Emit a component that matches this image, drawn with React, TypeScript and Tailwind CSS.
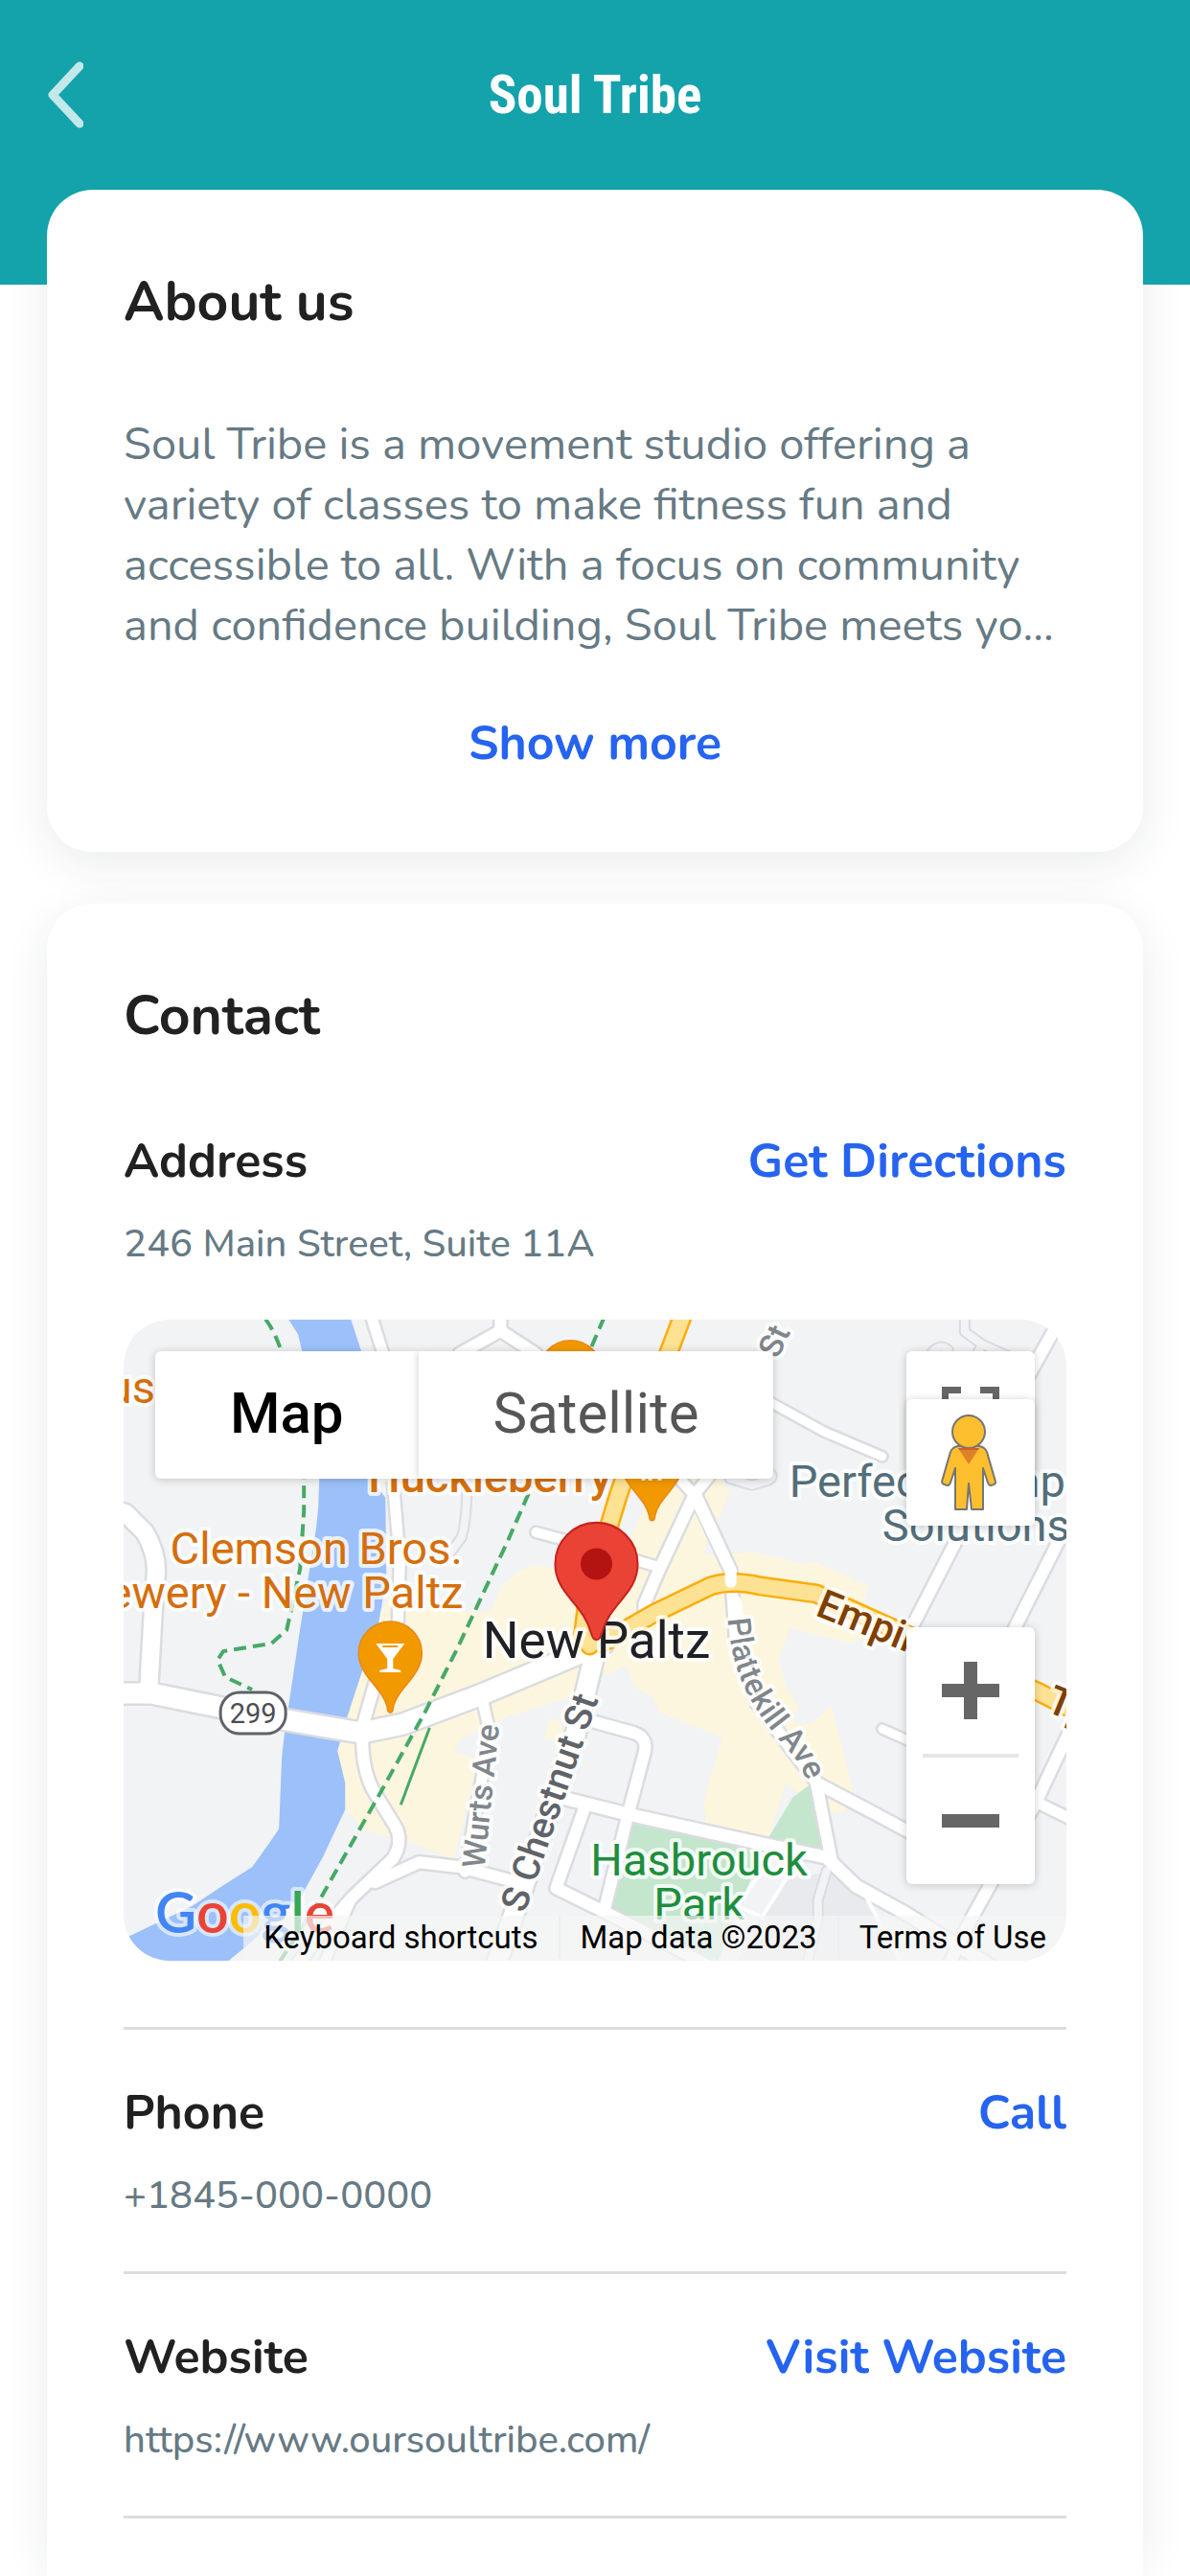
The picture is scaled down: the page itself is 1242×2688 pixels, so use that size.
import { useState } from 'react'
import type { ReactNode } from 'react'
import { clsx } from 'clsx'

const ABOUT =
  'Soul Tribe is a movement studio offering a variety of classes to make fitness fun and accessible to all. With a focus on community and confidence building, Soul Tribe meets you where you are and helps you move with joy.'

interface ContactItem {
  label: string
  value: string
  action: string
  href: string
}

const address: ContactItem = {
  label: 'Address',
  value: '246 Main Street, Suite 11A',
  action: 'Get Directions',
  href: '#directions',
}

const items: ContactItem[] = [
  { label: 'Phone', value: '+1845-000-0000', action: 'Call', href: 'tel:+18450000000' },
  {
    label: 'Website',
    value: 'https://www.oursoultribe.com/',
    action: 'Visit Website',
    href: '#website',
  },
]

// Streets drawn as a grey casing with a white line on top
const streets: { d: string; w: number }[] = [
  { d: 'M-5 200 L2 202 L22 222 Q34 242 34 262 L31 300 L26 390', w: 18 },
  { d: 'M258 -4 L270 34 L281 170 L288 250 L286 316', w: 11 },
  { d: 'M264 373 L249 425 V443 Q250 474 262 494 L283 528 Q290 540 285 554 L281 562 L238 603 L212 633 L178 676', w: 12 },
  { d: 'M238 603 L222 640 L208 674', w: 10 },
  { d: 'M262 587 L308 566 L351 571 L404 585', w: 12 },
  { d: 'M393 -4 V12 L350 36 M393 12 L430 36', w: 12 },
  { d: 'M430 222 L460 230', w: 10 },
  { d: 'M374 396 L382 432 L366 520 L356 576', w: 11 },
  { d: 'M491 350 L471 433 L414 600 L388 674', w: 20 },
  { d: 'M462 500 L526 516 L671 548 L733 561 L764 591 L815 619 L904 674', w: 13 },
  { d: 'M492 420 L532 431 Q547 436 543 452 L526 516 L502 613', w: 12 },
  { d: 'M481 508 L451 593 L502 618 L577 656 L620 680', w: 12 },
  { d: 'M576 162 L595 183 L612 162', w: 11 },
  { d: 'M595 180 L633 262 L638 330 L660 400 L722 482 L738 564', w: 12 },
  { d: 'M595 183 L558 262 L543 297 V312', w: 12 },
  { d: 'M530 250 L557 258', w: 10 },
  { d: 'M724 484 L781 514 L822 536', w: 12 },
  { d: 'M953 504 L990 522', w: 11 },
  { d: 'M670 84 L730 117 L791 143', w: 9 },
  { d: 'M867 233 L812 340', w: 12 },
  { d: 'M974 233 L925 330', w: 12 },
  { d: 'M972 8 L944 58', w: 12 },
  { d: 'M986 430 L950 506 L881 630 L860 674', w: 12 },
  { d: 'M791 427 L820 440', w: 9 },
]

const alleys = [
  'M358 180 Q357 215 352 228 L341 243',
  'M672 158 Q680 164 672 168 L655 173 L632 166',
  'M877 -4 V13 L895 26 L888 40 M895 26 L930 42',
  'M842 36 Q850 24 860 32',
  'M733 575 L724 605 V625 L712 674',
]

const highways = [
  'M583 -4 L569 33 L516 183 L484 288 L479 330 L486 340',
  'M498 338 L554 306 L612 278 Q634 271 664 278 L722 286 L820 330 L953 388 L992 408',
]

const trails = [
  'M148 0 Q160 16 167 42 L188 140 L188 200 L184 260 L174 306 L170 324 L154 338 L104 346 L98 355 L106 373 L134 386',
  'M501 -2 L423 180 L401 230 L348 343 L314 410 L268 493 L204 606 L160 674',
]

function MapPin({ x, y, children }: { x: number; y: number; children?: ReactNode }) {
  return (
    <g transform={`translate(${x} ${y})`}>
      <path
        d="M0 0 C-2 0 -3 -2 -3 -5 C-6 -24 -33 -38 -33 -62 A33 33 0 0 1 33 -62 C33 -38 6 -24 3 -5 C3 -2 2 0 0 0Z"
        fill="#f29900"
        stroke="#e8881a"
        strokeWidth="1.5"
      />
      {children}
    </g>
  )
}

function MapCanvas() {
  return (
    <svg
      viewBox="0 0 983 669"
      preserveAspectRatio="xMidYMid slice"
      className="block h-full w-full"
      role="img"
      aria-label="Map of New Paltz"
      fontFamily='Roboto, "Liberation Sans", sans-serif'
    >
      <rect width="983" height="669" fill="#f1f3f4" />

      {/* Land areas */}
      <g fill="#fdf6de">
        <path d="M276 291 L324 301 L374 306 L384 303 L394 278 L414 262 L431 256 L460 262 L500 330 L478 360 L468 393 L404 413 L371 428 L351 438 L344 451 L369 458 L364 483 L344 564 L296 543 L249 532 L225 500 L215 450 L245 350Z" />
        <path d="M557 166 H622 L632 180 L604 245 L660 243 L712 256 L719 252 L777 278 L771 295 L800 310 V330 L755 337 L695 322 L683 353 L691 383 L703 403 L698 420 L715 423 L738 403 L760 491 L757 511 L738 515 L690 484 L672 541 L607 526 L605 503 L624 436 L559 410 L552 395 L535 385 L523 361 L502 372 L480 330 L535 213Z" />
        <path d="M444 416 L456 420 L460 438 L439 438Z" />
      </g>
      <path
        d="M172 0 H237 L250 40 L258 166 L273 186 L274 270 L266 316 L249 366 L233 415 L223 450 L231 483 V511 L208 560 L186 600 L131 651 L109 669 H0 V646 L6 643 L71 612 L104 590 L134 571 L154 543 L162 531 L165 456 L168 430 L184 323 L201 216 L203 196 L204 166 L200 90 L186 33 L182 16Z"
        fill="#9cc0f9"
      />
      <g fill="#c3e6cd">
        <path d="M531 526 L650 548 L660 570 L630 640 L620 669 L508 614Z" />
        <path d="M717 484 L728 555 L672 541 L698 498Z" />
      </g>
      <path d="M691 583 L745 575 L771 600 L785 625 L808 669 H640 L665 622Z" fill="#e8eaed" />

      {/* Streets */}
      <g fill="none" strokeLinejoin="round" strokeLinecap="round">
        {streets.map((s) => (
          <path key={s.d} d={s.d} stroke="#dadce0" strokeWidth={s.w + 5} />
        ))}
        <path d="M-5 390 H29 L103 405 L171 418 L248 431 L291 422 L371 392 L500 338" stroke="#dadce0" strokeWidth="26" />
        {alleys.map((d) => (
          <path key={d} d={d} stroke="#dadce0" strokeWidth="12" />
        ))}
        {alleys.map((d) => (
          <path key={d} d={d} stroke="#f1f3f4" strokeWidth="8" />
        ))}
        {streets.map((s) => (
          <path key={s.d} d={s.d} stroke="#ffffff" strokeWidth={s.w} />
        ))}
        <path d="M-5 390 H29 L103 405 L171 418 L248 431 L291 422 L371 392 L500 338" stroke="#ffffff" strokeWidth="21" />
        <path d="M643 613 L667 624 M691 583 L665 624 M771 596 L812 674 M660 583 L640 612" stroke="#ffffff" strokeWidth="4" />
        {highways.map((d) => (
          <path key={d} d={d} stroke="#fbad0a" strokeWidth="21" />
        ))}
        {highways.map((d) => (
          <path key={d} d={d} stroke="#fde293" strokeWidth="16" />
        ))}
        <path d="M595 183 L633 262 V274 M638 294 L642 320" stroke="#ffffff" strokeWidth="12" />
      </g>
      <g fill="none" stroke="#47a967" strokeWidth="4">
        {trails.map((d) => (
          <path key={d} d={d} strokeDasharray="13 7" />
        ))}
        <path d="M319 426 L289 506" strokeWidth="3" />
      </g>

      {/* Places */}
      <MapPin x={466} y={117} />
      <MapPin x={551} y={210}>
        <path d="M-9 -62 V-42 M-2 -62 V-42 M8 -62 V-42" stroke="#fff" strokeWidth="4" />
      </MapPin>
      <MapPin x={278} y={410}>
        <path d="M-15 -72 H15 L3 -56 V-46 L11 -44 V-42 H-11 V-44 L-3 -46 V-56Z" fill="#fff" />
        <path d="M-8 -69 H8" stroke="#f29900" strokeWidth="2" />
      </MapPin>
      <rect x="101" y="389" width="68" height="43" rx="20" fill="#fff" stroke="#5f6368" strokeWidth="3" />
      <text x="135" y="421" fontSize="29" textAnchor="middle" fill="#4b4e52">
        299
      </text>

      <g stroke="#ffffff" strokeOpacity="0.8" strokeWidth="8" strokeLinejoin="round" paintOrder="stroke">
        <g fontSize="47" fill="#d56e0c">
          <text x="33" y="87" textAnchor="end">
            us
          </text>
          <text x="201" y="255" textAnchor="middle">
            Clemson Bros.
          </text>
          <text x="354" y="301" textAnchor="end">
            Brewery - New Paltz
          </text>
        </g>
        <text x="382" y="180" fontSize="47" fontWeight="500" textAnchor="middle" fill="#d56e0c">
          Huckleberry
        </text>
        <g fontSize="47" fill="#546e7a">
          <text x="694" y="185">
            Perfect Comp
          </text>
          <text x="791" y="231">
            Solutions
          </text>
        </g>
        <g fontSize="47" fill="#1e8e3e" textAnchor="middle">
          <text x="600" y="580">
            Hasbrouck
          </text>
          <text x="600" y="626">
            Park
          </text>
        </g>
        <text transform="translate(720 308) rotate(22)" fontSize="42" fontWeight="500" fill="#7f3f00">
          Empire
        </text>
        <text transform="translate(960 408) rotate(22)" fontSize="42" fontWeight="500" fill="#7f3f00">
          Tpke
        </text>
        <text transform="translate(376 573) rotate(-84)" fontSize="33" fontWeight="500" fill="#80868b">
          Wurts Ave
        </text>
        <text transform="translate(418 620) rotate(-71)" fontSize="39" fontWeight="500" fill="#5f6368">
          S Chestnut St
        </text>
        <text transform="translate(682 42) rotate(-65)" fontSize="34" fontWeight="500" fill="#80868b">
          St
        </text>
        <path id="plattekill" d="M630 312 C634 362 648 392 672 424 S702 452 716 490" fill="none" stroke="none" />
        <text fontSize="33" fontWeight="500" fill="#80868b">
          <textPath href="#plattekill">Plattekill Ave</textPath>
        </text>
        <text x="493" y="353" fontSize="53" textAnchor="middle" fill="#202124">
          New Paltz
        </text>
      </g>

      {/* Google wordmark */}
      <text
        x="33"
        y="640"
        fontSize="59"
        fontWeight="600"
        fontFamily='Lato, "Open Sans", sans-serif'
        stroke="#ffffff"
        strokeOpacity="0.6"
        strokeWidth="8"
        strokeLinejoin="round"
        paintOrder="stroke"
      >
        <tspan fill="#4285f4">G</tspan>
        <tspan fill="#ea4335">o</tspan>
        <tspan fill="#fbbc04">o</tspan>
        <tspan fill="#4285f4">g</tspan>
        <tspan fill="#34a853">l</tspan>
        <tspan fill="#ea4335">e</tspan>
      </text>

      {/* Marker */}
      <path
        d="M493 334 C490 334 489 332 487 326 C479 296 450 286 450 255 A43 43 0 0 1 536 255 C536 286 507 296 499 326 C497 332 496 334 493 334Z"
        fill="#ea4335"
        stroke="#c5221f"
        strokeWidth="2"
      />
      <circle cx="493" cy="255" r="16.5" fill="#b31412" />
    </svg>
  )
}

function Pegman() {
  return (
    <svg viewBox="0 0 134 132" className="h-[132px] w-[134px]" aria-hidden="true">
      <g fill="#fdbf2d" stroke="#757575" strokeWidth="2" strokeLinejoin="round">
        <path d="M54 49 Q48 50 46 55 L37 86 Q37 89 43 90 Q45 90 46 87 L51 72 V115 H63 L65 88 L68 115 H80 V72 L85 87 Q86 90 88 90 Q94 89 93 86 L84 55 Q82 50 76 49Z" />
        <circle cx="65" cy="34" r="17" />
      </g>
      <path d="M54 51 H76 L65 68Z" fill="#dc8328" />
      <path d="M54 51 H76 L75 53 H55Z" fill="#d0602a" />
    </svg>
  )
}

function StudioMap() {
  const [mapType, setMapType] = useState('Map')

  return (
    <div className="relative mt-[51px] h-[669px] overflow-hidden rounded-[48px] font-[Roboto,sans-serif]">
      <MapCanvas />

      <div className="absolute top-[33px] left-[33px] flex">
        {['Map', 'Satellite'].map((type) => (
          <button
            key={type}
            onClick={() => setMapType(type)}
            className={clsx(
              'h-[133px] bg-white px-[78px] pb-1 text-[60px] leading-none shadow-[0_1px_10px_rgba(0,0,0,0.2)] first:rounded-l-md last:rounded-r-md',
              mapType === type ? 'font-medium text-black' : 'text-[#565656]'
            )}
          >
            {type}
          </button>
        ))}
      </div>

      <button
        aria-label="Toggle fullscreen view"
        className="absolute top-[33px] right-[33px] flex h-[133px] w-[134px] items-center justify-center rounded-md bg-white shadow-[0_1px_10px_rgba(0,0,0,0.2)]"
      >
        <svg viewBox="0 0 60 60" className="size-[60px]" fill="none" stroke="#666666" strokeWidth="7">
          <path d="M3.5 20 V3.5 H20 M40 3.5 H56.5 V20 M56.5 40 V56.5 H40 M20 56.5 H3.5 V40" />
        </svg>
      </button>
      <button
        aria-label="Show street view"
        className="absolute top-[83px] right-[33px] rounded-md bg-white shadow-[0_1px_10px_rgba(0,0,0,0.2)]"
      >
        <Pegman />
      </button>

      <div className="absolute top-[321px] right-[33px] flex w-[134px] flex-col items-center rounded-md bg-white shadow-[0_1px_10px_rgba(0,0,0,0.2)]">
        <button aria-label="Zoom in" className="flex h-[132px] w-full items-center justify-center">
          <svg viewBox="0 0 60 60" className="size-[60px]" stroke="#666666" strokeWidth="14">
            <path d="M30 0 V60 M0 30 H60" />
          </svg>
        </button>
        <div className="h-1 w-[100px] bg-[#e6e6e6]" />
        <button aria-label="Zoom out" className="flex h-[132px] w-full items-center justify-center">
          <svg viewBox="0 0 60 60" className="size-[60px]" stroke="#666666" strokeWidth="14">
            <path d="M0 30 H60" />
          </svg>
        </button>
      </div>

      <div className="absolute right-0 bottom-0 flex h-[47px] items-center divide-x-2 divide-[#ececee]/80 bg-[#f5f5f5]/70 pb-0.5 text-[33px] leading-[45px] text-black">
        <button className="px-[21px]">Keyboard shortcuts</button>
        <span className="px-[21px]">Map data ©2023</span>
        <a href="#terms" className="px-[21px]">
          Terms of Use
        </a>
      </div>
    </div>
  )
}

function ContactRow({ label, value, action, href }: ContactItem) {
  return (
    <div>
      <div className="flex items-center justify-between text-[50px] leading-[64px] font-bold">
        <h3 className="text-[#212121]">{label}</h3>
        <a href={href} className="text-[#2563f0]">
          {action}
        </a>
      </div>
      <p className="mt-[26px] text-[40px] leading-[56px] font-medium text-[#667a84]">{value}</p>
    </div>
  )
}

// The shadow sits on its own layer so that it falls on the page but not on the header
function Card({ title, className, children }: { title: string; className: string; children: ReactNode }) {
  return (
    <section
      className={clsx(
        'relative flex flex-col bg-white px-20 pt-[81px] before:absolute before:inset-0 before:-z-20 before:rounded-[48px] before:shadow-[0_12px_48px_rgba(30,40,60,0.09)]',
        className
      )}
    >
      <h2 className="text-[57px] leading-[72px] font-bold text-[#212121]">{title}</h2>
      {children}
    </section>
  )
}

export default function App() {
  const [expanded, setExpanded] = useState(false)

  return (
    <div className="isolate flex min-h-screen flex-col bg-white font-[Nunito,'Open_Sans',sans-serif]">
      <header className="relative -z-10 bg-[#14a2ab] pb-[99px]">
        <div className="grid h-[198px] grid-cols-3 items-center px-[49px]">
          <button aria-label="Back" className="justify-self-start">
            <svg viewBox="0 0 38 70" className="h-[70px] w-[38px]" fill="none">
              <path
                d="M34 5 L6 35 L34 65"
                stroke="#c3e8e9"
                strokeWidth="9"
                strokeLinecap="round"
                strokeLinejoin="round"
              />
            </svg>
          </button>
          <h1 className="text-center font-['Roboto_Condensed',Roboto,sans-serif] text-[55px] leading-[64px] font-bold whitespace-nowrap text-white">
            Soul Tribe
          </h1>
        </div>
      </header>

      <main className="-mt-[99px] flex grow flex-col gap-[54px] px-[49px]">
        <Card title="About us" className="rounded-[48px] pb-[81px]">
          <p className={clsx('mt-[81px] text-[47px] leading-[63px] text-[#667a84]', !expanded && 'line-clamp-4')}>
            {ABOUT}
          </p>
          <button
            onClick={() => setExpanded(!expanded)}
            className="mt-[60px] self-center text-[50px] leading-[64px] font-bold text-[#2563f0]"
          >
            {expanded ? 'Show less' : 'Show more'}
          </button>
        </Card>

        <Card title="Contact" className="grow rounded-t-[48px]">
          <div className="mt-[84px]">
            <ContactRow {...address} />
          </div>
          <StudioMap />
          <div className="mt-[69px] border-b-[3px] border-[#dddddd]">
            {items.map((item) => (
              <div key={item.label} className="border-t-[3px] border-[#dddddd] pt-[55px] pb-[51px]">
                <ContactRow {...item} />
              </div>
            ))}
          </div>
        </Card>
      </main>
    </div>
  )
}
